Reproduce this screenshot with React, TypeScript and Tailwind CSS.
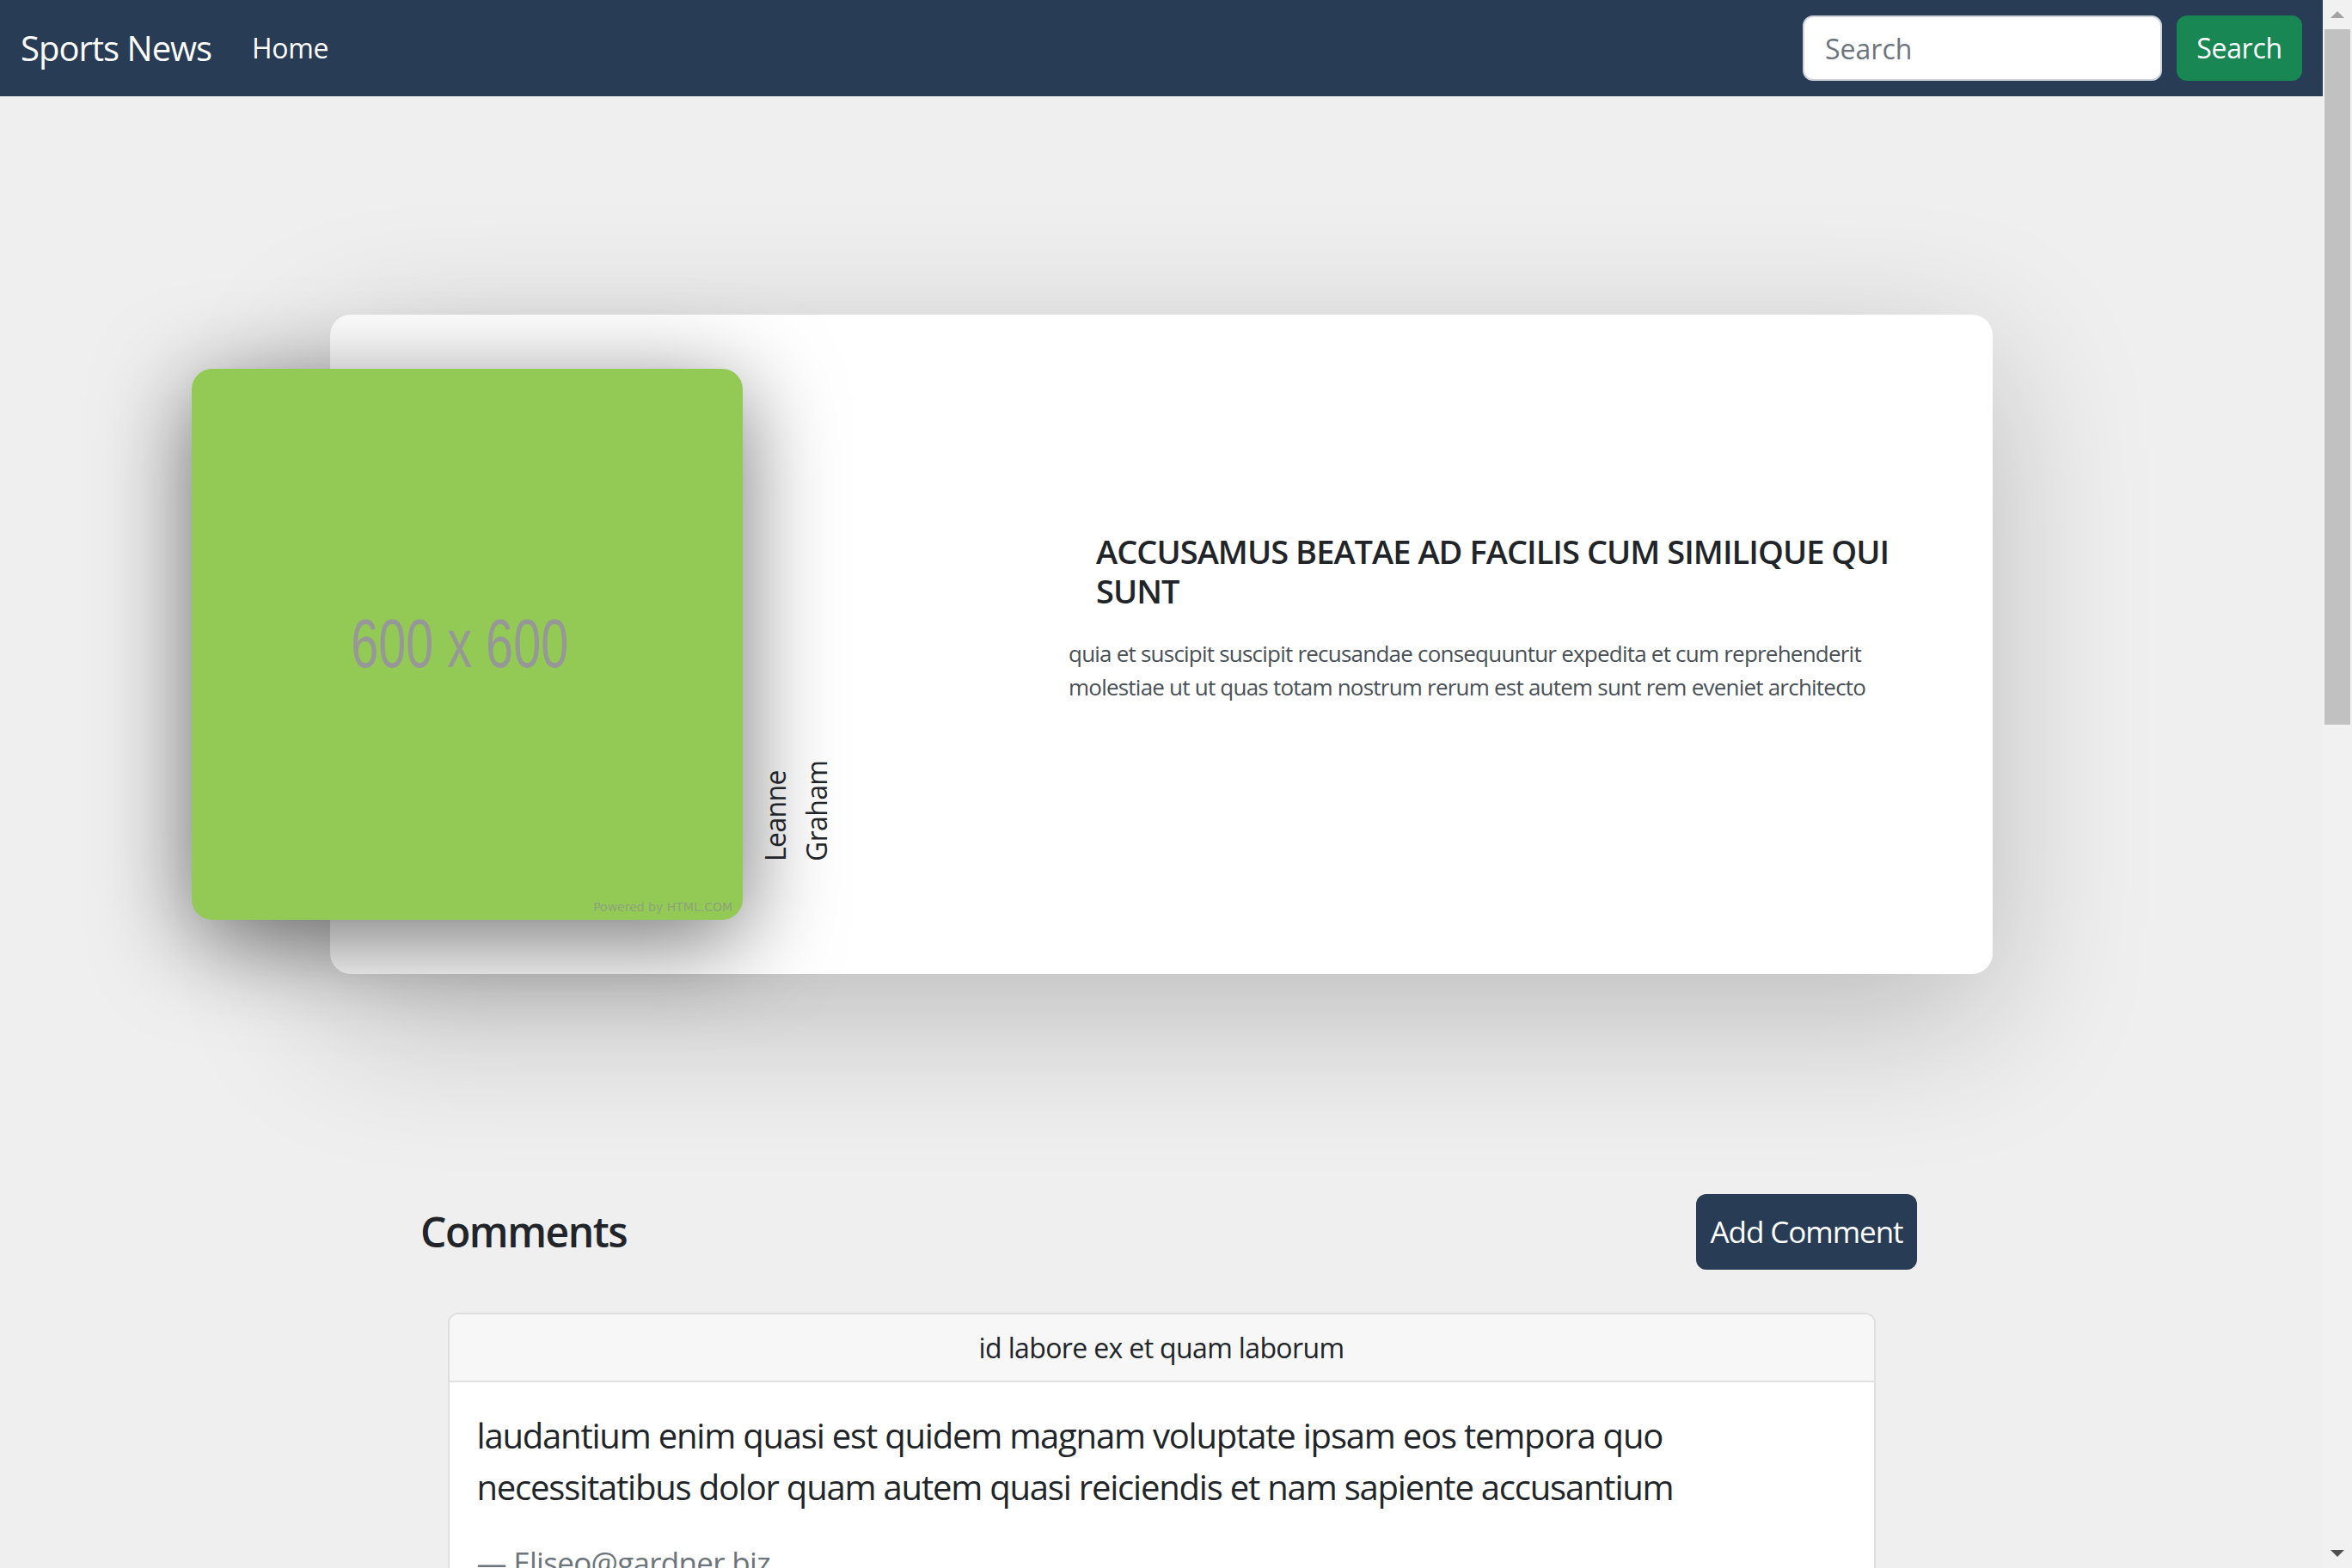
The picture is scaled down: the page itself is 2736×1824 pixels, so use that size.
import React from 'react';

const Navbar = () => (
    <nav className="flex h-[112px] shrink-0 items-center bg-[#283c55] px-[24px]">
        {/* Brand + links */}
        <a className="w-[269px] text-[40px] leading-[60px] tracking-[-0.025em] text-white">Sports News</a>
        <a className="text-[32px] leading-[48px] tracking-[-0.01em] text-white">Home</a>

        {/* Search form */}
        <form className="ml-auto flex items-center gap-[17px]" onSubmit={(e) => e.preventDefault()}>
            <input
                type="text"
                placeholder="Search"
                className="h-[76px] w-[418px] rounded-[12px] border-2 border-[#ced4da] bg-white px-[24px] text-[32px] text-[#212529] outline-none placeholder:text-[#6c757d]"
            />
            <button className="h-[76px] w-[146px] rounded-[12px] bg-[#198754] text-[32px] tracking-[-0.01em] text-white">
                Search
            </button>
        </form>
    </nav>
);

const PostCard = () => (
    <section className="pt-[254px]">
        <div className="mx-auto flex h-[767px] w-[1934px] items-center rounded-[24px] bg-white shadow-[0_50px_180px_rgba(0,0,0,0.22)]">
            {/* Placeholder picture hanging off the left edge */}
            <div className="relative -ml-[161px] flex h-[641px] w-[641px] shrink-0 items-center justify-center rounded-[24px] bg-[#93c955] shadow-[0_24px_110px_rgba(0,0,0,0.55)]">
                <span className="-ml-[18px] -mt-[1px] inline-block scale-x-[0.72] font-['Liberation_Sans',Arial,sans-serif] text-[80px] leading-none text-[#979797]">
                    600 x 600
                </span>
                <span className="absolute bottom-[8px] right-[12px] font-['DejaVu_Sans',sans-serif] text-[14px] leading-none text-[#8fa37a]">
                    Powered by HTML.COM
                </span>
            </div>

            {/* Author, written bottom to top */}
            <div className="mb-[131px] ml-[14px] h-[124px] self-end rotate-180 text-[32px] leading-[48px] tracking-[-0.02em] text-[#212529] [writing-mode:vertical-rl]">
                Leanne Graham
            </div>

            {/* Post text */}
            <div className="ml-auto mr-[65px] mt-[253px] w-[1010px] self-start">
                <h5 className="mb-[31px] pl-[32px] text-[38px] font-semibold uppercase leading-[45.6px] tracking-[-0.025em] text-[#212529]">
                    accusamus beatae ad facilis cum similique qui sunt
                </h5>
                <p className="text-[26px] leading-[39px] tracking-[-0.03em] text-[#495057]">
                    quia et suscipit suscipit recusandae consequuntur expedita et cum reprehenderit molestiae ut ut quas totam nostrum rerum est autem sunt rem eveniet architecto
                </p>
            </div>
        </div>
    </section>
);

const Comments = () => (
    <section className="mt-[256px]">
        <div className="ml-[489px] flex w-[1741px] items-center justify-between">
            <h4 className="text-[48px] font-semibold leading-[57.6px] tracking-[-0.03em] text-[#212529]">Comments</h4>
            <button className="h-[88px] w-[257px] rounded-[12px] bg-[#283c55] text-center text-[35px] tracking-[-0.03em] text-white">
                Add Comment
            </button>
        </div>

        <div className="mx-auto mt-[50px] w-[1661px] overflow-hidden rounded-[12px] border-2 border-[#dfdfdf] bg-white">
            <div className="flex h-[79px] items-center justify-center border-b-2 border-[#dfdfdf] bg-[#f7f7f7] text-[32px] tracking-[-0.02em] text-[#212529]">
                id labore ex et quam laborum
            </div>
            <div className="p-[32px]">
                <blockquote className="text-[40px] leading-[60px] tracking-[-0.03em] text-[#212529]">
                    laudantium enim quasi est quidem magnam voluptate ipsam eos tempora quo necessitatibus dolor quam autem quasi reiciendis et nam sapiente accusantium
                </blockquote>
                <p className="mt-[32px] text-[35px] leading-[52px] tracking-[-0.02em] text-[#6c757d]">
                    — Eliseo@gardner.biz
                </p>
                <p className="mt-[24px] text-[40px] leading-[60px] text-[#212529]">&nbsp;</p>
            </div>
        </div>
    </section>
);

const Scrollbar = () => (
    <div className="flex h-full w-[34px] shrink-0 flex-col bg-[#f1f1f1]">
        <div className="flex h-[34px] items-center justify-center">
            <div className="h-0 w-0 border-x-[8px] border-b-[8px] border-x-transparent border-b-[#a3a3a3]" />
        </div>
        <div className="mx-[2px] h-[809px] bg-[#c1c1c1]" />
        <div className="flex-1" />
        <div className="flex h-[34px] items-center justify-center">
            <div className="h-0 w-0 border-x-[8px] border-t-[8px] border-x-transparent border-t-[#505050]" />
        </div>
    </div>
);

export default function App() {
    return (
        <div className="flex h-[1824px] w-[2736px] overflow-hidden font-['Open_Sans','Noto_Sans',sans-serif]">
            <div className="flex h-full w-[2702px] flex-col overflow-hidden bg-[#efefef]">
                <Navbar />
                <PostCard />
                <Comments />
            </div>
            <Scrollbar />
        </div>
    );
}
